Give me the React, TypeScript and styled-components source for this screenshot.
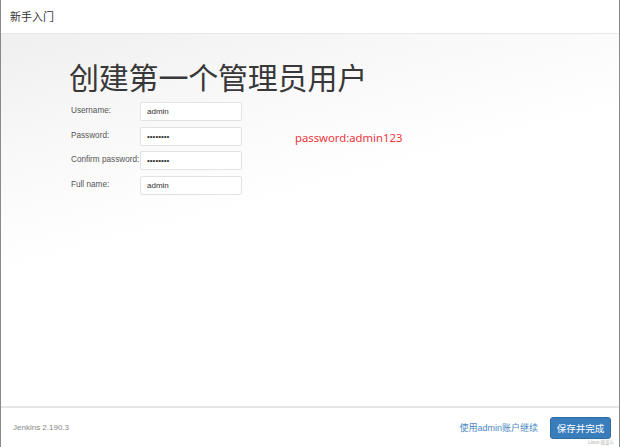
import React from 'react'
import styled, { createGlobalStyle } from 'styled-components'

const GlobalStyle = createGlobalStyle`
html, body {
  margin: 0;
  padding: 0;
  background: #fff;
}
* { box-sizing: border-box; }
`

const fields = [
  { label: 'Username:', value: 'admin', type: 'text' },
  { label: 'Password:', value: 'admin123', type: 'password' },
  { label: 'Confirm password:', value: 'admin123', type: 'password' },
  { label: 'Full name:', value: 'admin', type: 'text' },
]

function App()
{
  return (
    <>
      <GlobalStyle />
      <Frame>
        <Header>
          <HeadTitle>新手入门</HeadTitle>
        </Header>

        <Body>
          <Title>创建第一个管理员用户</Title>
          <FormArea>
            <Form>
              {fields.map((f) => (
                <Row key={f.label}>
                  <Label>{f.label}</Label>
                  <Input type={f.type} defaultValue={f.value} readOnly />
                </Row>
              ))}
            </Form>
            <Note>password:admin123</Note>
          </FormArea>
        </Body>

        <Footer>
          <Version>Jenkins 2.190.3</Version>
          <Actions>
            <TextLink>使用admin账户继续</TextLink>
            <SaveBtn>保存并完成</SaveBtn>
          </Actions>
          <Mark>Linux-就该么</Mark>
        </Footer>
      </Frame>
    </>
  )
}

export default App

const Frame = styled.div`
width:620px;
height:447px;
display:flex;
flex-direction:column;
border-left:1px solid #8a8a8a;
border-right:1px solid #8a8a8a;
background:#fff;
font-family:"Liberation Sans", "Noto Sans CJK SC", sans-serif;
`

const Header = styled.div`
height:34px;
flex:none;
display:flex;
align-items:center;
padding-left:9px;
border-bottom:1px solid #e8e8e8;
background:#fff;
`

const HeadTitle = styled.div`
font-family:"Noto Sans CJK SC", sans-serif;
font-size:11px;
color:#333;
padding-bottom:1px;
`

const Body = styled.div`
flex:1;
padding:22px 0 0 68px;
background:linear-gradient(165deg, #efefef 0%, #f8f8f8 22%, #ffffff 45%);
`

const Title = styled.h1`
margin:0;
font-family:"Noto Sans CJK SC", sans-serif;
font-weight:400;
font-size:30px;
line-height:40px;
color:#383838;
letter-spacing:-0.2px;
`

const FormArea = styled.div`
display:flex;
align-items:flex-start;
margin-top:6px;
padding-left:2px;
`

const Form = styled.div`
display:flex;
flex-direction:column;
gap:5.5px;
`

const Row = styled.div`
display:flex;
align-items:center;
height:19px;
`

const Label = styled.label`
width:69px;
font-size:8.2px;
color:#555;
padding-bottom:2px;
`

const Input = styled.input`
width:102px;
height:19px;
border:1px solid #e2e2e2;
border-radius:2px;
padding:0 6px;
font-family:"Liberation Sans", sans-serif;
font-size:8px;
color:#333;
background:#fff;
outline:none;
`

const Note = styled.div`
margin:28px 0 0 53px;
font-family:"Noto Sans", sans-serif;
font-size:11.3px;
color:#f2353c;
`

const Footer = styled.div`
position:relative;
height:41px;
flex:none;
display:flex;
align-items:center;
justify-content:space-between;
padding:0 8px 0 12px;
border-top:2px solid #e6e6e6;
background:#fff;
`

const Version = styled.div`
font-size:8px;
color:#888;
`

const Actions = styled.div`
display:flex;
align-items:center;
gap:6px;
`

const TextLink = styled.a`
font-family:"Liberation Sans", "Noto Sans CJK SC", sans-serif;
font-size:9px;
color:#4a87c4;
cursor:pointer;
padding-right:6px;
`

const SaveBtn = styled.button`
width:61px;
height:22px;
border:1px solid #2e6da4;
border-radius:3px;
background:#3a7dbd;
color:#fff;
font-family:"Noto Sans CJK SC", sans-serif;
font-size:9.5px;
padding:0;
`

const Mark = styled.div`
position:absolute;
right:5px;
bottom:2px;
font-size:4.5px;
color:#aaa;
`
